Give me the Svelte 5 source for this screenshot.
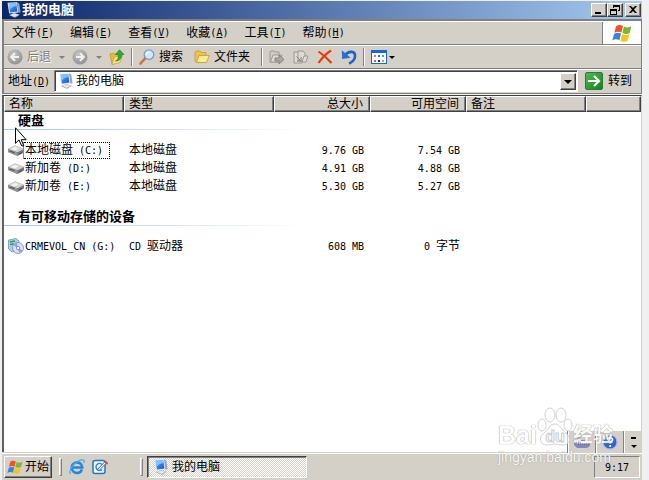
<script>
  const menus = [
    { name: "文件", key: "F" },
    { name: "编辑", key: "E" },
    { name: "查看", key: "V" },
    { name: "收藏", key: "A" },
    { name: "工具", key: "T" },
    { name: "帮助", key: "H" },
  ];

  const groups = [
    {
      title: "硬盘",
      items: [
        { name: "本地磁盘 (C:)", type: "本地磁盘", size: "9.76 GB", free: "7.54 GB", icon: "disk" },
        { name: "新加卷 (D:)", type: "本地磁盘", size: "4.91 GB", free: "4.88 GB", icon: "disk" },
        { name: "新加卷 (E:)", type: "本地磁盘", size: "5.30 GB", free: "5.27 GB", icon: "disk" },
      ],
    },
    {
      title: "有可移动存储的设备",
      items: [
        { name: "CRMEVOL_CN (G:)", type: "CD 驱动器", size: "608 MB", free: "0 字节", icon: "cd" },
      ],
    },
  ];

  const dots = [
    ["#8a8ad0", 0, 0], ["#2a8a4a", 4, 0], ["#3ca0d0", 8, 0],
    ["#e06030", 0, 5], ["#1038a0", 4, 5], ["#e0a020", 8, 5],
  ];

  let focused = $state("本地磁盘 (C:)");
</script>

<!-- ASCII runs get the half-width face, the rest stays full width -->
{#snippet mixed(text)}{#each text.split(/([\x20-\x7e]+)/) as run, i}{#if i % 2}<span class="half">{run}</span>{:else}{run}{/if}{/each}{/snippet}

{#snippet computer()}
  <svg class="icon" viewBox="0 0 16 16" aria-hidden="true">
    <path d="M3 13.200 8 11l6 1.800-5 3z" fill="#9a9ca8" />
    <path d="M4 13 8 11.300l5 1.400-4.400 2.300z" fill="#e4e5ec" />
    <path d="M1.500 .8 11 .3 12.500 10.500 3.200 11.500z" fill="#dbeafa" />
    <path d="M2.600 1.600 10.200 1.200 11.400 9.600 4 10.400z" fill="url(#screen)" />
    <path d="M2.600 1.600 10.200 1.200 10.600 4C7.500 4.200 5 5.800 3.600 7.800z" fill="#8cccff" opacity=".8" />
    <path d="M11 .3l2.200 1L14.600 10.200l-2.100.6z" fill="#8ea2cc" />
  </svg>
{/snippet}

{#snippet flag()}
  <svg class="flag" viewBox="0 0 20 19" aria-hidden="true">
    <path d="M4 2.2C6.5.6 8.5.8 11 2L9.4 8.5C7.2 7.3 4.8 7.4 2.3 8.8z" fill="#ee5526" />
    <path d="M12 2.5c2.4 1.2 4.8 1.2 7.4-.2L17.700 9c-2.500 1.300-4.800 1.200-7.300-.1z" fill="#79b830" />
    <path d="M2 10c2.4-1.5 4.8-1.6 7.1-.4L7.4 16.2C5.1 15 2.8 15 .3 16.5z" fill="#3f83d8" />
    <path d="M10.1 10.1c2.4 1.2 4.7 1.3 7.3 0l-1.8 6.7c-2.5 1.3-4.8 1.2-7.2-.1z" fill="#f5c41d" />
  </svg>
{/snippet}

<svg class="defs" aria-hidden="true">
  <defs>
    <linearGradient id="screen" x1="0" y1="0" x2="1" y2="1">
      <stop offset="0" stop-color="#5ab0f8" />
      <stop offset="1" stop-color="#1650c8" />
    </linearGradient>
    <linearGradient id="go" x1="0" y1="0" x2="1" y2="1">
      <stop offset="0" stop-color="#58b858" />
      <stop offset="1" stop-color="#0c8414" />
    </linearGradient>
    <radialGradient id="grey" cx=".4" cy=".3" r=".8">
      <stop offset="0" stop-color="#c4c4c4" />
      <stop offset="1" stop-color="#8c8c8c" />
    </radialGradient>
  </defs>
</svg>

<div class="screen">
  <header class="title-bar">
    {@render computer()}
    <h1>我的电脑</h1>
    <button class="raised caption" aria-label="最小化">
      <svg viewBox="0 0 12 10"><path d="M2 7h6v2H2z" /></svg>
    </button>
    <button class="raised caption" aria-label="还原">
      <svg viewBox="0 0 12 10"><path d="M4 0h7v6H9V5h1V2H5v1H4zM1 4h7v6H1zM2 6v3h5V6z" fill-rule="evenodd" /></svg>
    </button>
    <button class="raised caption close" aria-label="关闭">
      <svg viewBox="0 0 12 10"><path d="M2 1h2l2 2 2-2h2L7 4.500 10 8H8L6 6 4 8H2l3-3.500z" /></svg>
    </button>
  </header>

  <div class="bars">
    <nav class="bar menu-bar">
      {#each menus as menu}
        <button>{menu.name}<span class="half">(<u>{menu.key}</u>)</span></button>
      {/each}
      <div class="brand">{@render flag()}</div>
    </nav>

    <div class="bar tool-bar">
      <button class="tool disabled" disabled>
        <svg class="icon" viewBox="0 0 16 16">
          <circle cx="8" cy="8" r="7.500" fill="url(#grey)" />
          <path d="M12 8H4.500M8 4.200 4.200 8 8 11.800" fill="none" stroke="#f4f2ee" stroke-width="2" />
        </svg>
        后退
      </button>
      <button class="drop disabled" aria-label="后退列表" disabled><i class="arrow"></i></button>
      <button class="tool disabled" aria-label="前进" disabled>
        <svg class="icon" viewBox="0 0 16 16">
          <circle cx="8" cy="8" r="7.500" fill="url(#grey)" />
          <path d="M4 8h7.500M8 4.200 11.800 8 8 11.800" fill="none" stroke="#f4f2ee" stroke-width="2" />
        </svg>
      </button>
      <button class="drop disabled" aria-label="前进列表" disabled><i class="arrow"></i></button>
      <button class="tool up" aria-label="向上">
        <svg class="icon" viewBox="0 0 16 16">
          <path d="M1 5l4-1 1 1 4-1v9l-7 2.500z" fill="#e8b83c" stroke="#b88a20" stroke-width=".6" />
          <path d="M3 15.500 5.500 8l8-2-2.500 7.500z" fill="#fbe48a" stroke="#c49a2c" stroke-width=".6" />
          <path d="M6.500 12c2.500-1 3-3 2.800-6.500H6.500L10.500 .8 15 5.500h-2.500c.4 4-2 6.500-6 6.500z" fill="#2cae34" stroke="#147820" stroke-width=".6" />
        </svg>
      </button>
      <span class="separator"></span>
      <button class="tool">
        <svg class="icon" viewBox="0 0 16 16">
          <path d="M1.500 14.500 6.500 9" stroke="#c8743c" stroke-width="2.600" stroke-linecap="round" />
          <circle cx="10" cy="5.600" r="4.800" fill="#cde8fb" stroke="#7a9ec8" stroke-width="1.300" />
          <path d="M7.500 5.500c.2-1.500 1-2.400 2.500-2.600" stroke="#fff" stroke-width="1.300" fill="none" />
        </svg>
        搜索
      </button>
      <button class="tool folders">
        <svg class="icon" viewBox="0 0 16 16">
          <path d="M1 3.500 2 2h4l1.500 1.500H12v3l-9 7-2-1.500z" fill="#f0c348" stroke="#c08e28" stroke-width=".7" />
          <path d="M2.500 13.500 5 6.500h10.300l-2.800 7z" fill="#fdeb94" stroke="#c8982c" stroke-width=".8" />
        </svg>
        文件夹
      </button>
      <span class="separator"></span>
      <button class="tool" aria-label="移至" disabled>
        <svg class="icon" viewBox="0 0 16 16" fill="#d0cdc6" stroke="#9c9a95">
          <path d="M1 3l1-1h3l1 1h4v10H1z" />
          <path d="M1.500 13 4 6h9l-2 7z" fill="#dedbd5" />
          <path d="M6 9h4V6l5 4.500L10 15v-3H6z" fill="#aaa8a3" stroke="#85837e" />
        </svg>
      </button>
      <button class="tool" aria-label="复制到" disabled>
        <svg class="icon" viewBox="0 0 16 16" fill="#dedbd5" stroke="#9c9a95">
          <path d="M1 3h6l2 2v9H1z" />
          <path d="M5 2h5l2 2v8H5z" />
          <path d="M9 13l2-6h4l-2 6z" />
          <path d="M3.500 7.500l4 4M8 8v4H4" fill="none" stroke="#85837e" />
        </svg>
      </button>
      <button class="tool" aria-label="删除">
        <svg class="icon" viewBox="0 0 16 16">
          <path d="M1.500 2.500C6 5.500 10 9 14.500 14M14 1.500C8.500 5 5 9 1.500 14" fill="none" stroke="#e6390c" stroke-width="2.100" />
        </svg>
      </button>
      <button class="tool undo" aria-label="撤消">
        <svg class="icon" viewBox="0 0 16 16">
          <path d="M4 6.500C8 1 14.500 2 14 7.500c-.2 3.500-2.500 5.500-6 7" fill="none" stroke="#1c62c8" stroke-width="2.600" />
          <path d="M.8 1.200 1.200 10 9.500 8.800z" fill="#2470d8" />
        </svg>
      </button>
      <span class="separator"></span>
      <button class="tool views" aria-label="查看">
        <svg class="icon" viewBox="0 0 16 16">
          <rect x=".5" y="1.500" width="15" height="13" fill="#fff" stroke="#1668d8" />
          <path d="M0 1h16v3H0z" fill="#1668d8" />
          {#each dots as [color, x, y]}
            <rect x={x + 3} y={y + 6} width="2" height="2" fill={color} />
          {/each}
        </svg>
        <i class="arrow"></i>
      </button>
    </div>

    <div class="bar address-bar">
      <label for="address">地址<span class="half">(<u>D</u>)</span></label>
      <div class="combo">
        {@render computer()}
        <select id="address">
          <option>我的电脑</option>
        </select>
        <span class="raised combo-arrow"><i class="arrow"></i></span>
      </div>
      <button class="go">
        <svg viewBox="0 0 18 18" aria-hidden="true">
          <rect x=".5" y=".5" width="17" height="17" rx="1.500" fill="url(#go)" stroke="#2e7a34" />
          <path d="M3 9h11M9 4l5 5-5 5" fill="none" stroke="#fff" stroke-width="2.200" />
        </svg>
        转到
      </button>
    </div>
  </div>

  <main class="list">
    <table>
      <colgroup>
        <col class="col-name" />
        <col class="col-type" />
        <col class="col-size" />
        <col class="col-size" />
        <col class="col-note" />
        <col />
      </colgroup>
      <thead>
        <tr>
          <th>名称</th>
          <th>类型</th>
          <th class="number">总大小</th>
          <th class="number">可用空间</th>
          <th>备注</th>
          <th></th>
        </tr>
      </thead>
      {#each groups as group}
        <tbody>
          <tr class="group">
            <th colspan="6"><div>{group.title}</div></th>
          </tr>
          {#each group.items as item}
            <tr class="item" onclick={() => (focused = item.name)}>
              <td>
                <div class="name">
                  {#if item.icon === "disk"}
                    <svg class="icon" viewBox="0 0 16 16" aria-hidden="true">
                      <path d="M0 7 7 3.500 16 7v3.500L9.500 14 0 10z" fill="#77777b" />
                      <path d="M0 7 7 3.500 16 7 9.500 10.300z" fill="#d2d2d4" />
                      <path d="M2.500 7 7 4.800 11 6.400 6.500 8.500z" fill="#f2f2f2" />
                      <path d="M0 7.300 9.500 10.700V14L0 10z" fill="#97979b" />
                      <path d="M11 11.600l3-1.500v1l-3 1.500z" fill="#45474a" />
                      <path d="M1.500 9l5 1.800" stroke="#4c4c50" />
                    </svg>
                  {:else}
                    <svg class="icon" viewBox="0 0 16 16" aria-hidden="true">
                      <path d="M.5 2 8 .5l3 2.500v9l-7 2-3.500-3z" fill="#a8d2ec" stroke="#6c93b8" stroke-width=".8" />
                      <path d="M2 4l5-1M2 6.500 6 6" stroke="#2c9c58" stroke-width="1.400" />
                      <circle cx="10" cy="10" r="5.500" fill="#d9e2f8" stroke="#7d8cba" stroke-width=".8" />
                      <path d="M10 10 5.500 7.500A5 5 0 0 1 9 5zM10 10l4.500 2.500A5 5 0 0 1 11 15z" fill="#8da2ec" />
                      <circle cx="10" cy="10" r="1.700" fill="#fff" stroke="#6d7cac" stroke-width=".8" />
                    </svg>
                  {/if}
                  <span class="label" class:focused={focused === item.name}>{@render mixed(item.name)}</span>
                </div>
              </td>
              <td>{@render mixed(item.type)}</td>
              <td class="number">{@render mixed(item.size)}</td>
              <td class="number">{@render mixed(item.free)}</td>
              <td></td>
              <td></td>
            </tr>
          {/each}
        </tbody>
      {/each}
    </table>
  </main>

  <footer class="task-bar">
    <button class="raised start">{@render flag()}开始</button>
    <span class="grip"></span>
    <button class="tool quick" aria-label="Internet Explorer">
      <svg class="icon" viewBox="0 0 16 16">
        <path d="M13 10.500A5.300 5.300 0 1 1 13.300 8.500H4" fill="none" stroke="#2088dc" stroke-width="2.600" />
        <path d="M1.500 15C-1 12 5 3 11.500 1.200 15 .2 16 1.800 14.600 4" fill="none" stroke="#48aaf0" stroke-width="1.200" />
      </svg>
    </button>
    <button class="tool quick" aria-label="显示桌面">
      <svg class="icon" viewBox="0 0 16 16">
        <rect x="1" y="1.500" width="12" height="13" rx="2" fill="#eef6ff" stroke="#2074c8" stroke-width="1.500" />
        <path d="M10 5.500a3.500 3.500 0 1 0 0 5" fill="none" stroke="#3a86d0" stroke-width="1.500" />
        <path d="M5.500 10.500 13.500 2l1.500 1.500-8 8z" fill="#fff" stroke="#2060a8" stroke-width=".9" />
        <path d="M13 2.500 15.500 5" stroke="#e05020" stroke-width="1.800" />
      </svg>
    </button>
    <span class="grip tasks-grip"></span>
    <button class="task">{@render computer()}我的电脑</button>
    <time class="clock">9:17</time>
  </footer>

  <div class="language-bar">
    <button aria-label="软键盘">
      <svg class="icon" viewBox="0 0 16 16">
        <path d="M4 5C3 2 8 4 9 1" fill="none" stroke="#777" />
        <path d="M0 6h13l3 3v3l-3 2H3l-3-3z" fill="#8589b8" />
        <path d="M1 7h12l2 2.500H3z" fill="#eceefa" />
        <path d="M2 8h11M4 10h11" stroke="#484c98" stroke-dasharray="1 1" />
      </svg>
    </button>
    <button aria-label="帮助">
      <svg class="icon" viewBox="0 0 16 16">
        <circle cx="8" cy="8" r="7" fill="#2c66d0" stroke="#a8c0ec" />
        <path d="M5.500 6.200C5.700 2.800 11 3.300 10.500 6 10.200 7.500 8.200 7.600 8.200 9.500M8.200 11v2" fill="none" stroke="#fff" stroke-width="1.800" />
      </svg>
    </button>
    <button class="options" aria-label="选项"><i class="dash"></i><i class="arrow"></i></button>
  </div>

  <div class="watermark">
    <div class="logo">
      <span>Bai</span>
      <svg viewBox="0 0 36 40" aria-hidden="true">
        <ellipse cx="5" cy="18" rx="4" ry="6" />
        <ellipse cx="13" cy="8" rx="5" ry="7" />
        <ellipse cx="24" cy="8" rx="5" ry="7" />
        <ellipse cx="31" cy="18" rx="4" ry="6" />
        <path d="M18 17c5 0 7 6 11 9 6 5 4 12-3 12-4 0-5-1-8-1s-4 1-8 1c-7 0-9-7-3-12 4-3 6-9 11-9z" />
        <text x="18" y="35" text-anchor="middle">du</text>
      </svg>
      <span class="cn">经验</span>
    </div>
    <div class="site">jingyan.baidu.com</div>
  </div>

  <svg class="cursor" viewBox="0 0 12 20" aria-hidden="true">
    <path d="M.5.8v15.500L4 12.900l2.700 6h2.100l-2.600-6.200h5z" fill="#fff" stroke="#000" />
  </svg>
</div>

<style>
  :global(body) {
    margin: 0;
    background: #f0f0f0;
  }

  .screen {
    position: relative;
    display: flex;
    flex-direction: column;
    box-sizing: border-box;
    min-height: 100vh;
    margin: 0 7px 0 2px;
    padding-top: 1px;
    font: 12px/16px "Liberation Sans", "Noto Sans CJK SC", sans-serif;
    color: #000;
    cursor: default;
  }

  .screen *,
  .screen *::before {
    box-sizing: border-box;
  }

  .defs {
    position: absolute;
    width: 0;
    height: 0;
  }

  button {
    display: flex;
    align-items: center;
    margin: 0;
    padding: 0;
    border: 0;
    background: none;
    color: inherit;
    font: inherit;
  }

  .half {
    font-family: "DejaVu Sans Mono", "Liberation Mono", monospace;
    font-size: 10px;
    line-height: 12px;
    white-space: pre;
  }

  u {
    text-underline-offset: 1px;
  }

  .icon {
    display: block;
    flex: none;
    width: 16px;
    height: 16px;
  }

  .raised {
    background: #d4d0c8;
    border: 1px solid;
    border-color: #fff #404040 #404040 #fff;
    box-shadow: inset -1px -1px #808080;
  }

  .arrow {
    flex: none;
    border: solid transparent;
    border-width: 3px 3px 0;
    border-top-color: #000;
  }

  .title-bar {
    display: flex;
    align-items: center;
    height: 18px;
    padding: 0 1px 0 4px;
    background: linear-gradient(90deg, #0a246a, #a6caf0);
  }

  h1 {
    flex: 1;
    margin: 0;
    color: #fff;
    font-size: 13px;
    font-weight: bold;
  }

  .caption {
    width: 16px;
    height: 14px;
    padding: 0 1px 1px;
  }

  .caption svg {
    width: 12px;
    height: 10px;
  }

  .caption.close {
    margin-left: 2px;
  }

  .bars {
    border: 1px solid #808080;
    border-width: 2px 1px 1px 2px;
    background: #d4d0c8;
  }

  .bar {
    display: flex;
    align-items: center;
    height: 24px;
    border-top: 1px solid #fff;
    border-bottom: 1px solid #808080;
  }

  .bar:last-child {
    border-bottom-color: #d4d0c8;
  }

  .menu-bar {
    gap: 16px;
    padding-left: 8px;
  }

  .brand {
    display: flex;
    align-items: center;
    align-self: stretch;
    justify-content: center;
    width: 39px;
    margin-left: auto;
    border-left: 1px solid #808080;
    background: #fff;
  }

  .flag {
    flex: none;
    width: 20px;
    height: 19px;
  }

  .tool-bar {
    padding-left: 3px;
  }

  .tool {
    gap: 4px;
    margin-right: 8px;
  }

  .disabled {
    color: #808080;
    text-shadow: 1px 1px #fff;
  }

  .disabled .arrow {
    border-top-color: #808080;
  }

  .drop {
    margin-right: 7px;
  }

  .up {
    margin: 0 6px 0 0;
  }

  .folders {
    margin: 0 11px 0 3px;
    gap: 4px;
  }

  .undo {
    margin-right: 6px;
  }

  .separator {
    align-self: stretch;
    width: 2px;
    margin: 2px 6px 2px 0;
    border-left: 1px solid #808080;
    border-right: 1px solid #fff;
  }

  .views {
    gap: 2px;
  }

  .address-bar {
    padding: 0 9px 0 4px;
  }

  .combo {
    display: flex;
    align-items: center;
    position: relative;
    flex: 1;
    height: 22px;
    margin: 0 7px 0 4px;
    padding-left: 3px;
    border: 1px solid;
    border-color: #808080 #fff #fff #808080;
    box-shadow: inset 1px 1px #404040;
    background: #fff;
  }

  select {
    flex: 1;
    align-self: stretch;
    padding: 0 0 0 2px;
    border: 0;
    outline: 0;
    appearance: none;
    background: none;
    color: inherit;
    font: inherit;
  }

  .combo-arrow {
    position: absolute;
    top: 2px;
    right: 1px;
    bottom: 1px;
    display: flex;
    align-items: center;
    justify-content: center;
    width: 16px;
    pointer-events: none;
  }

  .combo-arrow .arrow {
    border-width: 4px 4px 0;
  }

  .go {
    gap: 5px;
  }

  .go svg {
    width: 18px;
    height: 18px;
  }

  .list {
    flex: 1;
    margin-top: 1px;
    border: 1px solid #d4d0c8;
    border-top-color: #404040;
    border-left: 2px solid #606060;
    background: #fff;
  }

  table {
    width: 100%;
    border-collapse: separate;
    border-spacing: 0;
    table-layout: fixed;
  }

  .col-name,
  .col-note {
    width: 120px;
  }

  .col-type {
    width: 150px;
  }

  .col-size {
    width: 96px;
  }

  th,
  td {
    padding: 0;
    font-weight: normal;
    text-align: left;
    white-space: nowrap;
  }

  thead th {
    height: 16px;
    padding: 0 5px 0 4px;
    border: 1px solid;
    border-color: #fff #404040 #404040 #fff;
    box-shadow: inset -1px -1px #808080;
    background: #d4d0c8;
    line-height: 14px;
  }

  .number {
    padding-right: 6px;
    text-align: right;
  }

  .group th {
    padding-bottom: 11px;
  }

  tbody + tbody .group th {
    padding-top: 13px;
  }

  .group div {
    height: 18px;
    padding-left: 14px;
    background: linear-gradient(90deg, #a0c4f4, #fff) 0 100% / 300px 1px no-repeat;
    font-size: 13px;
    font-weight: bold;
    line-height: 18px;
  }

  .item td {
    height: 18px;
  }

  .item td + td:not(.number) {
    padding-left: 5px;
  }

  .name {
    display: flex;
    align-items: center;
    height: 18px;
    padding-left: 4px;
  }

  .label {
    height: 17px;
    padding: 0 6px 0 1px;
    border: 1px dotted transparent;
    border-left: 0;
    line-height: 15px;
  }

  .label.focused {
    border-color: #000;
    box-shadow: -1px 0 #888;
  }

  .task-bar {
    display: flex;
    align-items: center;
    height: 27px;
    padding: 0 2px;
    border-top: 1px solid #fff;
    box-shadow: 0 -1px #d4d0c8;
    background: #d4d0c8;
  }

  .start {
    gap: 2px;
    width: 48px;
    height: 22px;
    padding-left: 2px;
  }

  .start .flag {
    width: 16px;
    height: 15px;
  }

  .grip {
    width: 3px;
    height: 18px;
    margin: 0 7px;
    border: 1px solid;
    border-color: #fff #808080 #808080 #fff;
  }

  .tasks-grip {
    margin: 0 4px 0 32px;
  }

  .quick + .quick {
    margin-right: 0;
  }

  .quick {
    margin-right: 7px;
  }

  .task {
    gap: 3px;
    width: 160px;
    height: 22px;
    padding-left: 5px;
    border: 1px solid;
    border-color: #404040 #fff #fff #404040;
    box-shadow: inset 1px 1px #808080;
    background: repeating-conic-gradient(#fff 0 25%, #d4d0c8 0 50%) 0 0 / 2px 2px;
  }

  .clock {
    width: 46px;
    margin-left: auto;
    padding: 5px 0 3px 10px;
    border: 1px solid;
    border-color: #808080 #fff #fff #808080;
    font: 10px/12px "DejaVu Sans Mono", "Liberation Mono", monospace;
  }

  .language-bar {
    position: absolute;
    right: 0;
    bottom: 27px;
    display: flex;
    align-items: stretch;
    height: 22px;
    border-left: 1px solid #808080;
    background: #d4d0c8;
  }

  .language-bar button {
    padding: 0 5px;
    border-left: 1px solid #fff;
    border-right: 1px solid #808080;
  }

  .language-bar .options {
    flex-direction: column;
    justify-content: center;
    gap: 6px;
    width: 18px;
    border-right: 0;
  }

  .dash {
    width: 5px;
    height: 2px;
    background: #000;
  }

  .watermark {
    position: absolute;
    right: 28px;
    bottom: 16px;
    width: 116px;
    color: #fff;
    opacity: 0.85;
    pointer-events: none;
  }

  .logo {
    display: flex;
    align-items: flex-end;
    height: 40px;
    margin-bottom: 3px;
    font-size: 25px;
    font-weight: bold;
    line-height: 24px;
  }

  .logo span,
  .site {
    text-shadow: 0 0 1px #999, 0 0 1px #999;
  }

  .logo svg {
    flex: none;
    width: 36px;
    height: 40px;
    fill: #fff;
    fill-opacity: 0.7;
    stroke: #ccc;
  }

  .logo text {
    font-size: 16px;
    fill: #fff;
    stroke: #c4c4c4;
  }

  .cn {
    font-size: 20px;
  }

  .site {
    font-size: 14px;
    line-height: 14px;
  }

  .cursor {
    position: absolute;
    left: 13px;
    top: 127px;
    width: 12px;
    height: 20px;
  }
</style>
